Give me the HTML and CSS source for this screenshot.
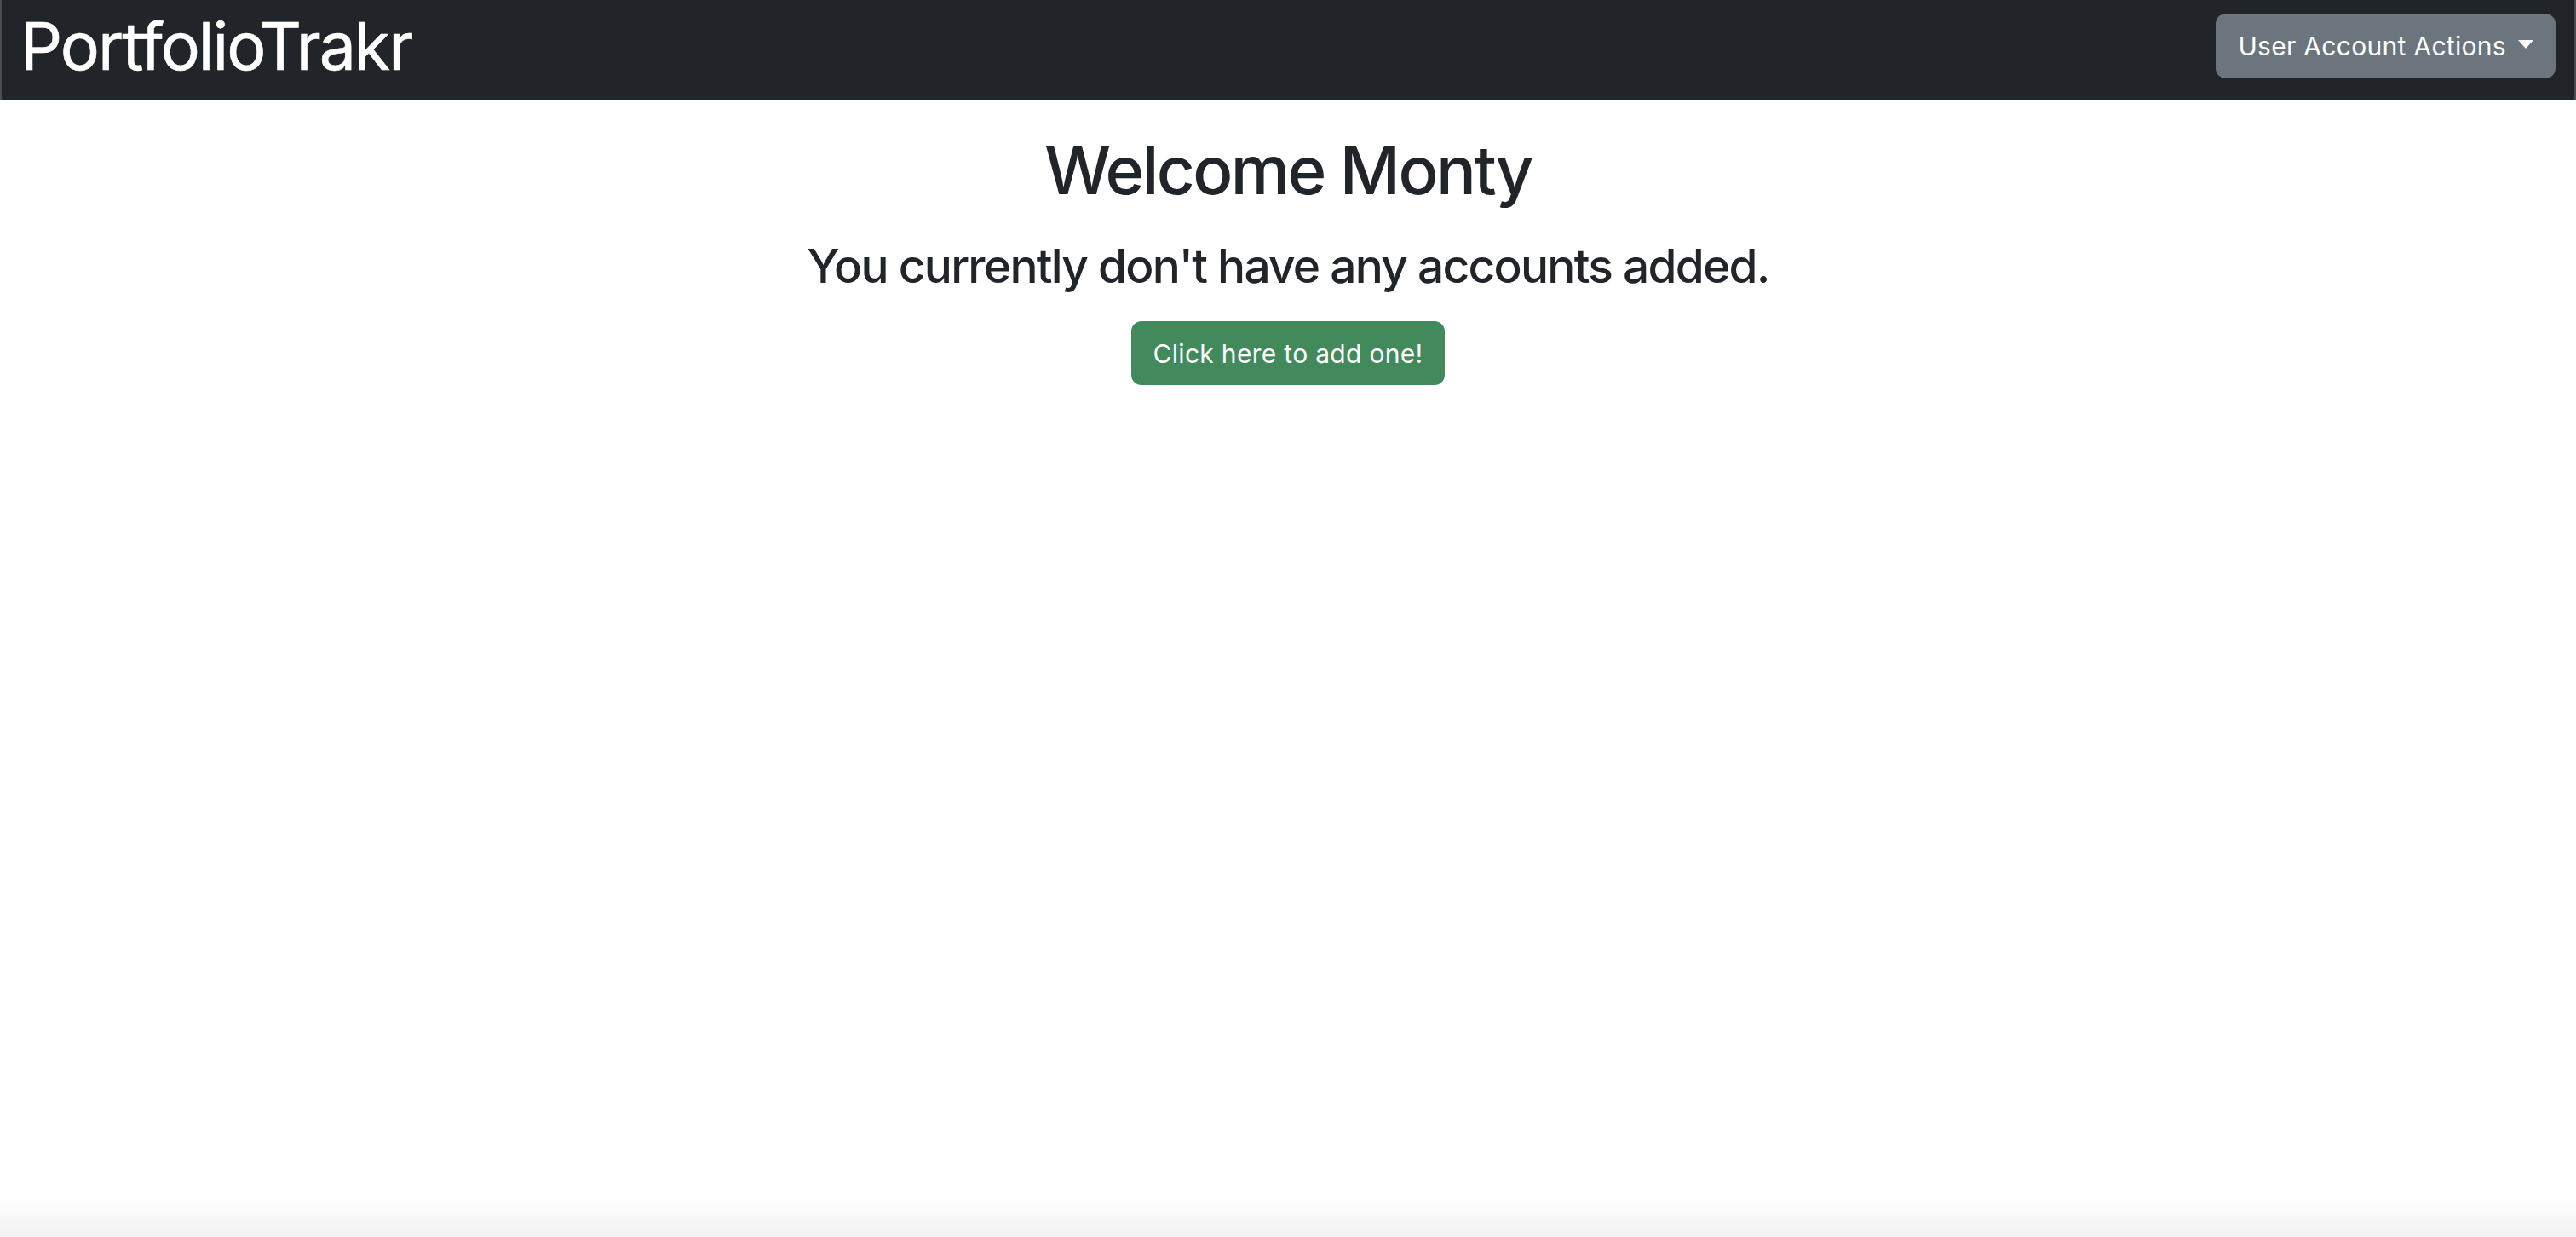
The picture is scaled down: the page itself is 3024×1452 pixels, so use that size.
FILE: index.html
```html
<!DOCTYPE html>
<html lang="en">
<head>
<meta charset="utf-8">
<title>PortfolioTrakr</title>
<link rel="stylesheet" href="styles.css">
</head>
<body>
<nav class="navbar">
  <a class="brand" href="#">PortfolioTrakr</a>
  <button class="btn btn-secondary dropdown-toggle" type="button">User Account Actions</button>
</nav>
<main class="content">
  <h1 class="welcome">Welcome Monty</h1>
  <h3 class="notice">You currently don't have any accounts added.</h3>
  <button class="btn btn-success" type="button">Click here to add one!</button>
</main>
<div class="bottom-shade"></div>
</body>
</html>
```
FILE: styles.css
```css
* { box-sizing: border-box; }
html, body { margin: 0; padding: 0; }
body {
  font-family: Inter, "Noto Sans", "Liberation Sans", sans-serif;
  color: #212529;
  background: #ffffff;
  min-height: 1452px;
}
.navbar {
  height: 117px;
  background: #212529;
  border-left: 2px solid #4a4d51;
  border-right: 2px solid #4a4d51;
  display: flex;
  justify-content: space-between;
  align-items: flex-start;
  padding: 16px 22px 0 22px;
}
.brand {
  font-size: 77px;
  line-height: 77px;
  color: #ffffff;
  text-decoration: none;
  font-weight: 400;
  letter-spacing: -2px;
  -webkit-text-stroke: 0.6px #ffffff;
}
.btn {
  font-family: inherit;
  font-size: 30px;
  line-height: 47px;
  padding: 12px 24px;
  border: 2px solid transparent;
  border-radius: 12px;
  color: #ffffff;
  cursor: pointer;
  letter-spacing: 0.3px;
}
.btn-secondary {
  background: #6c757d;
  border-color: #6c757d;
  line-height: 48px;
}
.dropdown-toggle::after {
  content: "";
  display: inline-block;
  margin-left: 14px;
  vertical-align: 0.255em;
  border-top: 10px solid #ffffff;
  border-left: 9px solid transparent;
  border-right: 9px solid transparent;
}
.content {
  text-align: center;
}
.welcome {
  font-size: 78px;
  line-height: 94px;
  font-weight: 500;
  letter-spacing: -2.6px;
  margin: 36px 0 0;
}
.notice {
  font-size: 55px;
  line-height: 66px;
  font-weight: 500;
  letter-spacing: -1.75px;
  margin: 32px 0 0;
}
.btn-success {
  margin-top: 32px;
  background: #428a5b;
  border-color: #428a5b;
  padding: 13px 24px 11px;
}
.bottom-shade {
  position: fixed;
  left: 0;
  right: 0;
  bottom: 0;
  height: 50px;
  background: linear-gradient(to bottom, rgba(0,0,0,0), rgba(0,0,0,0.05));
  pointer-events: none;
}
```
